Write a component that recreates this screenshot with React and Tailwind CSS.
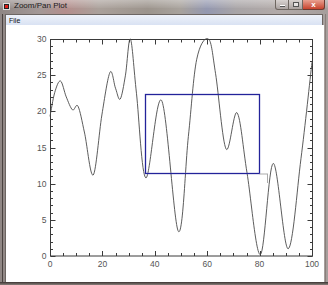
import React from "react";

const X = (x) => 49 + x * 2.62;
const Y = (y) => 256 - y * 7.233;

const pts = [
  [0, 19.3], [1.8, 22.6], [4.0, 24.2], [6.2, 22.0], [8.6, 20.2], [10.7, 20.7],
  [13.2, 17.0], [16.5, 11.2], [19.8, 19.5], [22.9, 25.4], [25.0, 23.2], [26.8, 21.7],
  [28.8, 25.0], [30.7, 30.0], [33.0, 22.5], [36.6, 10.8], [42.6, 21.5], [49.0, 3.4],
  [52.8, 16.5], [56.0, 27.2], [60.5, 30.0], [63.2, 25.2], [67.2, 14.8], [71.4, 19.8],
  [75.2, 11.5], [80.3, 0.2], [85.2, 12.8], [90.9, 1.0], [95.8, 13.5], [100, 26.8],
];

function curvePath() {
  const p = pts.map(([x, y]) => [X(x), Y(y)]);
  let d = `M${p[0][0].toFixed(2)},${p[0][1].toFixed(2)}`;
  for (let i = 0; i < p.length - 1; i++) {
    const p0 = p[i - 1] || p[i];
    const p1 = p[i];
    const p2 = p[i + 1];
    const p3 = p[i + 2] || p2;
    const c1 = [p1[0] + (p2[0] - p0[0]) / 6, p1[1] + (p2[1] - p0[1]) / 6];
    const c2 = [p2[0] - (p3[0] - p1[0]) / 6, p2[1] - (p3[1] - p1[1]) / 6];
    d += ` C${c1[0].toFixed(2)},${c1[1].toFixed(2)} ${c2[0].toFixed(2)},${c2[1].toFixed(2)} ${p2[0].toFixed(2)},${p2[1].toFixed(2)}`;
  }
  return d;
}

function Plot() {
  const xt = [];
  for (let v = 0; v <= 100; v += 5) xt.push(v);
  const yt = [];
  for (let v = 0; v <= 30; v += 1) yt.push(v);
  return (
    <svg width="318" height="257" viewBox="5 25 318 257" className="block">
      <rect x="5" y="25" width="318" height="257" fill="#ffffff" />
      <rect x="49.5" y="39.5" width="262" height="216.5" fill="none" stroke="#3a3a3a" strokeWidth="1" />
      {xt.map((v) => {
        const x = Math.round(X(v)) + 0.5;
        const len = v % 20 === 0 ? 5 : 3;
        return (
          <g key={"x" + v} stroke="#3a3a3a" strokeWidth="1">
            <line x1={x} y1={256} x2={x} y2={256 - len} />
            <line x1={x} y1={39.5} x2={x} y2={39.5 + len} />
          </g>
        );
      })}
      {yt.map((v) => {
        const y = Math.round(Y(v)) + 0.5;
        const len = v % 5 === 0 ? 5 : 2.5;
        return (
          <g key={"y" + v} stroke="#3a3a3a" strokeWidth="1">
            <line x1={49.5} y1={y} x2={49.5 + len} y2={y} />
            <line x1={311.5} y1={y} x2={311.5 - len} y2={y} />
          </g>
        );
      })}
      {[0, 5, 10, 15, 20, 25, 30].map((v) => (
        <text key={"yl" + v} x="45.5" y={Y(v) + 3} textAnchor="end" fontSize="8.5" fill="#555" fontFamily="'Liberation Sans', Arial, sans-serif">
          {v}
        </text>
      ))}
      {[0, 20, 40, 60, 80, 100].map((v) => (
        <text key={"xl" + v} x={X(v)} y="266.5" textAnchor="middle" fontSize="8.5" fill="#555" fontFamily="'Liberation Sans', Arial, sans-serif">
          {v}
        </text>
      ))}
      <path d={curvePath()} fill="none" stroke="#4a4a4a" strokeWidth="0.9" />
      <rect x="144.5" y="94.5" width="114" height="79" fill="none" stroke="#23239a" strokeWidth="1.3" />
      <line x1="258.5" y1="174" x2="267" y2="174" stroke="#aaa" strokeWidth="1" />
      <line x1="266.5" y1="174" x2="266.5" y2="183" stroke="#aaa" strokeWidth="1" />
    </svg>
  );
}

export default function App() {
  return (
    <div
      className="relative w-[328px] h-[285px] overflow-hidden bg-[linear-gradient(to_right,#8f8684_0%,#a39896_12%,#b48e8c_20%,#aaa09a_30%,#9c948c_45%,#a8a29c_55%,#9498b0_63%,#a8a4a6_72%,#b2aaa8_85%,#a69e9c_100%)]"
      style={{ fontFamily: "'Liberation Sans', Arial, sans-serif" }}
    >
      <div className="absolute inset-x-0 top-0 h-[8px] bg-[linear-gradient(to_bottom,rgba(255,255,255,0.35),rgba(255,255,255,0.05))]" />
      {/* title bar */}
      <div className="relative flex h-[14px] items-start">
        <div className="ml-[3px] mt-[3px] flex h-[7px] w-[7px] items-center justify-center bg-[#222] border border-[#ddd]">
          <div className="h-[3px] w-[3px] bg-[#e0201a]" />
        </div>
        <div className="ml-[4px] mt-[1px] text-[8px] leading-[10px] text-[#1a1a1a]">Zoom/Pan Plot</div>
        <div className="ml-auto mr-[3px] flex h-[10px]">
          <div className="flex w-[14px] items-end justify-center rounded-bl-[3px] border border-t-0 border-[#6e6660] bg-[linear-gradient(to_bottom,#d8d2d0,#aaa2a0)] pb-[2px]">
            <div className="h-[2px] w-[5px] bg-white border border-[#555] border-t-0 border-x-0" />
          </div>
          <div className="flex w-[14px] items-center justify-center border border-l-0 border-t-0 border-[#6e6660] bg-[linear-gradient(to_bottom,#d8d2d0,#aaa2a0)]">
            <div className="h-[5px] w-[6px] border border-[#555] bg-white/60" />
          </div>
          <div className="flex w-[22px] items-center justify-center rounded-br-[3px] border border-l-0 border-t-0 border-[#6e3a30] bg-[linear-gradient(to_bottom,#e8a090,#c8442e)] text-[8px] font-bold leading-none text-white">
            x
          </div>
        </div>
      </div>
      {/* client */}
      <div className="relative ml-[5px] mr-[5px] border border-[#6d6663] border-b-0">
        <div className="flex h-[10px] items-center bg-[linear-gradient(to_bottom,#eef2fa,#d9e2f3)] pl-[3px] text-[7px] leading-none text-[#111]">
          File
        </div>
        <Plot />
      </div>
      <div className="absolute inset-x-0 bottom-0 h-[3px] bg-[linear-gradient(to_bottom,#3c3432,#8a807c)]" />
      <div className="absolute left-[2px] top-[14px] bottom-[3px] w-[1px] bg-[#4a4240]" />
      <div className="absolute right-[2px] top-[14px] bottom-[3px] w-[1px] bg-[#8a7f7b]" />
    </div>
  );
}
